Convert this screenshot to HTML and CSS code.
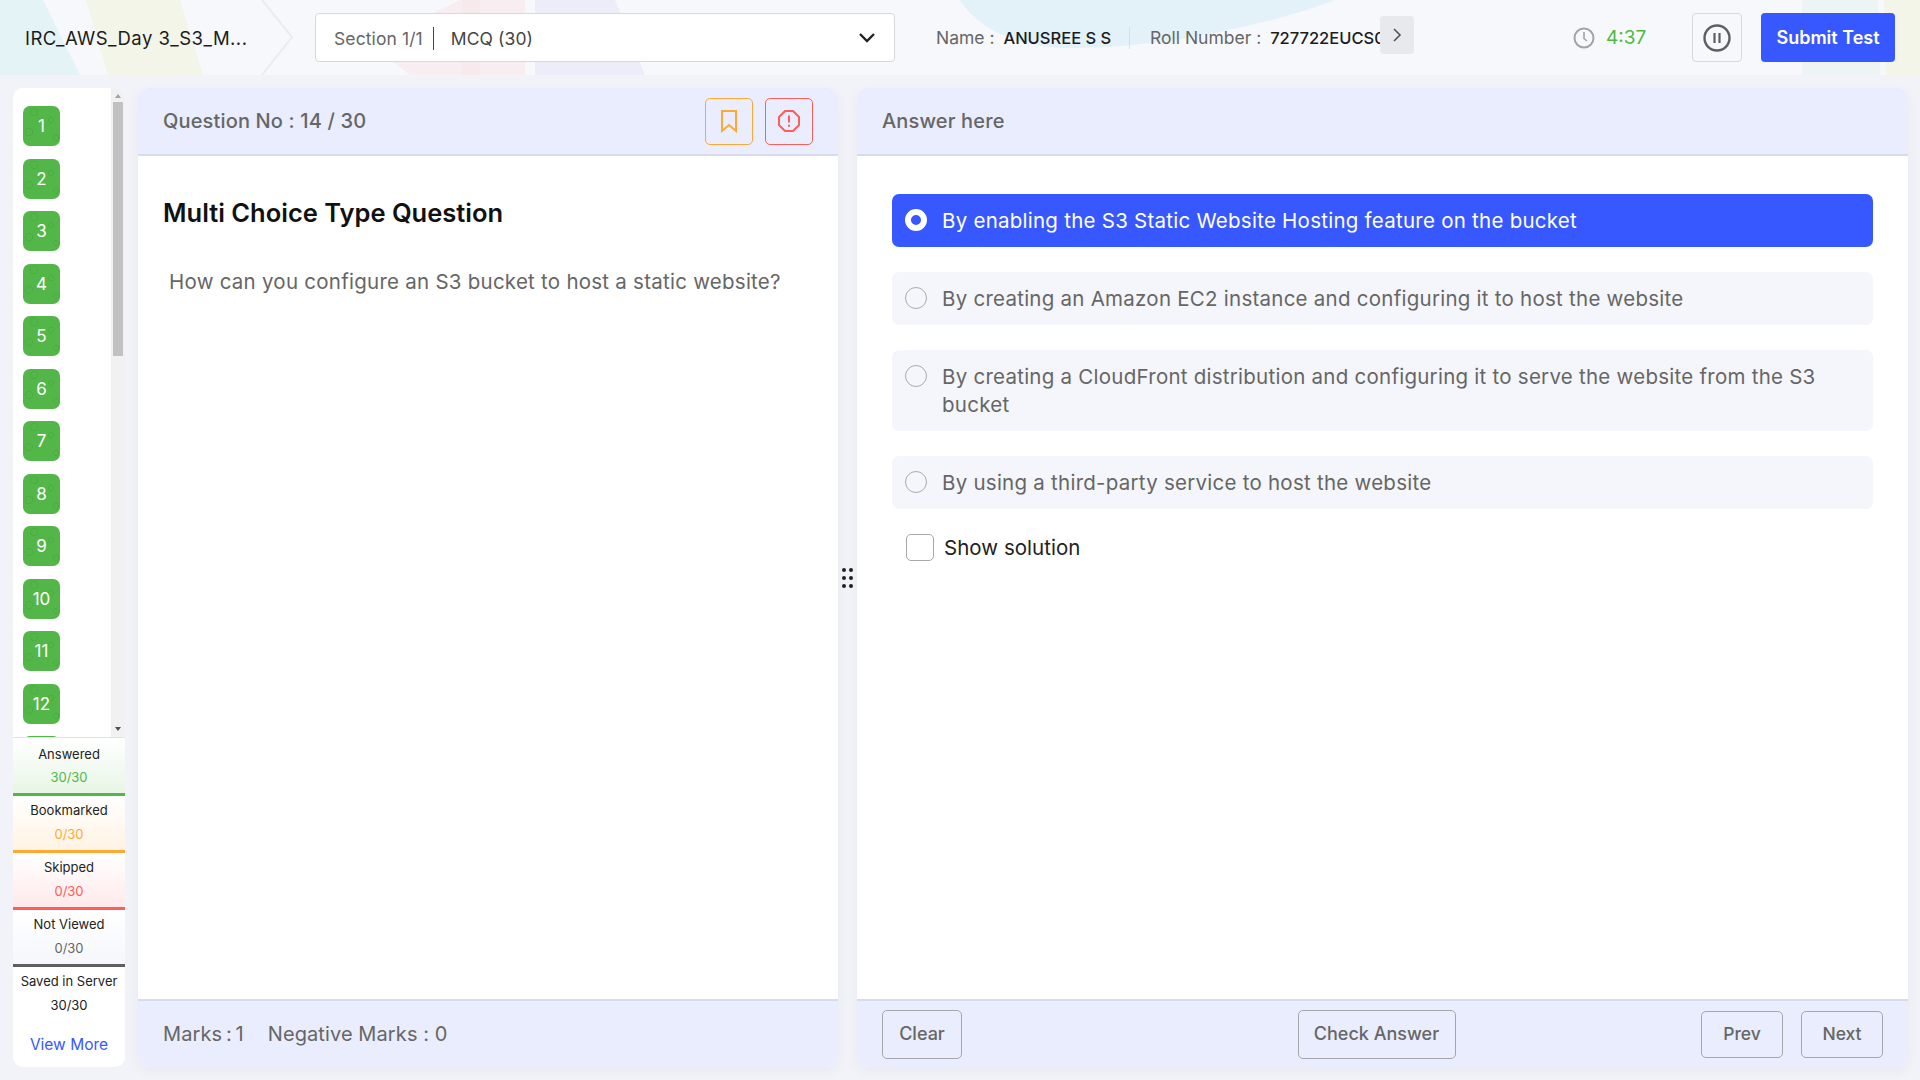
FILE: index.html
```html
<!doctype html>
<html lang="en">
    <head>
        <meta charset="UTF-8" />
        <meta name="viewport" content="width=device-width, initial-scale=1.0" />
        <title>IRC_AWS_Day 3_S3_MCQ</title>
        <link rel="stylesheet" href="styles.css">
    </head>
    <body>
        <div class="header">
            <svg class="header-art" width="1920" height="75" viewBox="0 0 1920 75">
                <path d="M0 0H43L80 75H0Z" fill="#e4f3f6" />
                <path d="M86 0H180L203 75H108Z" fill="#f2f5e7" />
                <path d="M370 40C385 55 400 68 410 75H525V0H460C440 10 400 28 370 40Z" fill="#f8eef1" />
                <path d="M462 0H480V75H462Z" fill="#f6eaed" />
                <path d="M535 0H615L645 75H535Z" fill="#ecedf8" />
                <path d="M960 0H1335C1260 28 1150 50 1060 48C1010 45 975 25 960 0Z" fill="#e3f2f9" />
                <path d="M1802 0H1878L1880 75H1802Z" fill="#ecf4f4" />
                <path d="M1884 0H1920V75H1886Z" fill="#f2f5e7" />
                <path d="M262 0L292 37L262 75" fill="none" stroke="#eaecf2" stroke-width="2" />
            </svg>
            <div class="test-name">IRC_AWS_Day 3_S3_M...</div>
            <div class="section-select">
                <span class="section-no">Section 1/1</span>
                <span class="section-type">MCQ (30)</span>
                <svg class="select-arrow" width="18" height="12" viewBox="0 0 18 12">
                    <path d="M2 2L9 9L16 2" fill="none" stroke="#222" stroke-width="2.4" />
                </svg>
            </div>
            <div class="user-info">
                <div class="user-name">Name : <b>ANUSREE S S</b></div>
                <div class="user-roll">Roll Number : <b>727722EUCS080</b></div>
                <button class="more-btn">
                    <svg width="12" height="16" viewBox="0 0 12 16">
                        <path d="M3 2L9 8L3 14" fill="none" stroke="#555" stroke-width="1.6" />
                    </svg>
                </button>
            </div>
            <div class="timer">
                <svg width="22" height="22" viewBox="0 0 22 22">
                    <circle cx="11" cy="11" r="9.5" fill="none" stroke="#a3a3a3" stroke-width="2" />
                    <path d="M11 5V11.5L14 14" fill="none" stroke="#a3a3a3" stroke-width="1.6" />
                </svg>
                <span>4:37</span>
            </div>
            <button class="pause-btn">
                <svg width="28" height="28" viewBox="0 0 28 28">
                    <circle cx="14" cy="14" r="12.5" fill="none" stroke="#5f5f5f" stroke-width="2.4" />
                    <path d="M11.5 9V19M16.5 9V19" fill="none" stroke="#5f5f5f" stroke-width="2.2" />
                </svg>
            </button>
            <button class="submit-btn">Submit Test</button>
        </div>

        <div class="main">
            <div class="sidebar">
                <div class="nav-wrap">
                    <div class="nav-list">
                        <div class="nav-item">1</div>
                        <div class="nav-item">2</div>
                        <div class="nav-item">3</div>
                        <div class="nav-item">4</div>
                        <div class="nav-item">5</div>
                        <div class="nav-item">6</div>
                        <div class="nav-item">7</div>
                        <div class="nav-item">8</div>
                        <div class="nav-item">9</div>
                        <div class="nav-item">10</div>
                        <div class="nav-item">11</div>
                        <div class="nav-item">12</div>
                        <div class="nav-item"></div>
                    </div>
                    <div class="scrollbar">
                        <div class="scroll-up"></div>
                        <div class="scroll-track"><div class="scroll-thumb"></div></div>
                        <div class="scroll-down"></div>
                    </div>
                </div>
                <div class="stat stat-answered">
                    <div class="stat-label">Answered</div>
                    <div class="stat-value">30/30</div>
                </div>
                <div class="stat stat-bookmarked">
                    <div class="stat-label">Bookmarked</div>
                    <div class="stat-value">0/30</div>
                </div>
                <div class="stat stat-skipped">
                    <div class="stat-label">Skipped</div>
                    <div class="stat-value">0/30</div>
                </div>
                <div class="stat stat-notviewed">
                    <div class="stat-label">Not Viewed</div>
                    <div class="stat-value">0/30</div>
                </div>
                <div class="stat stat-saved">
                    <div class="stat-label">Saved in Server</div>
                    <div class="stat-value">30/30</div>
                </div>
                <div class="view-more">View More</div>
            </div>

            <div class="panel question-panel">
                <div class="panel-head">
                    <div class="panel-title">Question No : 14 / 30</div>
                    <div class="head-actions">
                        <button class="icon-btn bookmark-btn">
                            <svg width="18" height="24" viewBox="0 0 18 24">
                                <path d="M2 2H16V22L9 16L2 22Z" fill="none" stroke="#ffa834" stroke-width="2" />
                            </svg>
                        </button>
                        <button class="icon-btn report-btn">
                            <svg width="24" height="24" viewBox="0 0 24 24">
                                <path d="M8 2H16L22 8V16L16 22H8L2 16V8Z" fill="none" stroke="#ff5c5c" stroke-width="2" stroke-linejoin="round" />
                                <path d="M12 6.5V13.5M12 15.8V17.8" fill="none" stroke="#ff5c5c" stroke-width="2" />
                            </svg>
                        </button>
                    </div>
                </div>
                <div class="panel-body question-body">
                    <h2>Multi Choice Type Question</h2>
                    <p>How can you configure an S3 bucket to host a static website?</p>
                </div>
                <div class="panel-foot marks">
                    <span class="marks-value">Marks : 1</span>
                    <span>Negative Marks : 0</span>
                </div>
            </div>

            <div class="splitter">
                <div class="drag-dots">
                    <i></i><i></i><i></i><i></i><i></i><i></i>
                </div>
            </div>

            <div class="panel answer-panel">
                <div class="panel-head">
                    <div class="panel-title">Answer here</div>
                </div>
                <div class="panel-body answer-body">
                    <div class="option selected"><span class="radio"></span><span>By enabling the S3 Static Website Hosting feature on the bucket</span></div>
                    <div class="option"><span class="radio"></span><span>By creating an Amazon EC2 instance and configuring it to host the website</span></div>
                    <div class="option"><span class="radio"></span><span>By creating a CloudFront distribution and configuring it to serve the website from the S3 bucket</span></div>
                    <div class="option"><span class="radio"></span><span>By using a third-party service to host the website</span></div>
                    <label class="show-solution"><span class="checkbox"></span>Show solution</label>
                </div>
                <div class="panel-foot answer-foot">
                    <div><button class="foot-btn clear-btn">Clear</button></div>
                    <button class="foot-btn check-btn">Check Answer</button>
                    <div class="foot-right">
                        <button class="foot-btn nav-btn">Prev</button>
                        <button class="foot-btn nav-btn">Next</button>
                    </div>
                </div>
            </div>
        </div>
    </body>
</html>
```

FILE: styles.css
```css
* {
    box-sizing: border-box;
}
body {
    font-family: Inter, "Noto Sans", sans-serif;
    margin: 0;
    height: 100vh;
    background-color: #f2f3f8;
    color: #666;
    overflow: hidden;
    display: flex;
    flex-direction: column;
}
button {
    font-family: inherit;
    cursor: pointer;
}
.header {
    position: relative;
    height: 75px;
    background-color: #f6f8fc;
    display: flex;
    align-items: center;
    flex-shrink: 0;
    overflow: hidden;
}
.header-art {
    position: absolute;
    top: 0;
    left: 0;
}
.test-name {
    position: relative;
    width: 315px;
    padding-left: 25px;
    font-size: 18.5px;
    letter-spacing: 0.45px;
    color: #1c1c1c;
}
.section-select {
    position: relative;
    width: 580px;
    height: 49px;
    background-color: #fff;
    border: 1px solid #d8d8dc;
    border-radius: 4px;
    display: flex;
    align-items: center;
    padding: 2px 18px 0;
    font-size: 17.5px;
    letter-spacing: 0.1px;
}
.section-no {
    padding-right: 10px;
    border-right: 1.5px solid #444;
    line-height: 23px;
}
.section-type {
    padding-left: 17px;
    color: #444;
}
.select-arrow {
    margin-left: auto;
    margin-top: -2px;
}
.user-info {
    position: relative;
    margin-left: 41px;
    display: flex;
    align-items: center;
    font-size: 17.5px;
}
.user-info b {
    font-size: 16.5px;
    font-weight: 500;
    color: #1c1c1c;
    margin-left: 4px;
}
.user-name {
    width: 194px;
    border-right: 1px solid #dcdce2;
    line-height: 22px;
    white-space: nowrap;
}
.user-roll {
    width: 230px;
    margin-left: 20px;
    white-space: nowrap;
    overflow: hidden;
}
.more-btn {
    width: 34px;
    height: 38px;
    margin-top: -5px;
    border: none;
    border-radius: 4px;
    background-color: #e8e9ec;
    padding: 0;
    display: flex;
    align-items: center;
    justify-content: center;
}
.timer {
    position: relative;
    width: 119px;
    margin-left: 159px;
    display: flex;
    align-items: center;
    gap: 11px;
    font-size: 19px;
    color: #4fb846;
}
.pause-btn {
    position: relative;
    width: 50px;
    height: 49px;
    background-color: #f7f8fb;
    border: 1px solid #d8d8dc;
    border-radius: 4px;
    padding: 0;
    display: flex;
    align-items: center;
    justify-content: center;
}
.submit-btn {
    position: relative;
    width: 134px;
    height: 49px;
    margin-left: 19px;
    background-color: #3757ff;
    color: #fff;
    border: none;
    border-radius: 4px;
    font-size: 18px;
    font-weight: 600;
}
.main {
    flex: 1;
    display: flex;
    min-height: 0;
    padding: 13px 12px 13px 13px;
}
.sidebar {
    width: 112px;
    margin-right: 13px;
    background-color: #fff;
    border-radius: 10px;
    display: flex;
    flex-direction: column;
    overflow: hidden;
}
.nav-wrap {
    height: 650px;
    display: flex;
    border-bottom: 1px solid #e2e2e2;
    flex-shrink: 0;
}
.nav-list {
    width: 98px;
    padding: 18px 0 0 10px;
    overflow: hidden;
}
.nav-item {
    width: 37px;
    height: 40px;
    margin-bottom: 12.5px;
    border-radius: 7px;
    color: #fff;
    font-size: 17px;
    display: flex;
    align-items: center;
    justify-content: center;
    background-color: #52b748;
    background-image:
        radial-gradient(circle at 11px 6px, transparent 3px, rgba(60, 150, 50, 0.35) 3.5px, transparent 4.5px),
        radial-gradient(circle at 6px 26px, transparent 3px, rgba(60, 150, 50, 0.35) 3.5px, transparent 4.5px),
        radial-gradient(circle at 28px 14px, transparent 2px, rgba(60, 150, 50, 0.35) 2.5px, transparent 3.5px),
        radial-gradient(circle at 33px 32px, transparent 2px, rgba(60, 150, 50, 0.35) 2.5px, transparent 3.5px);
}
.scrollbar {
    width: 14px;
    background-color: #f1f1f1;
    display: flex;
    flex-direction: column;
    align-items: center;
}
.scroll-up,
.scroll-down {
    width: 0;
    height: 0;
    border-left: 3px solid transparent;
    border-right: 3px solid transparent;
    flex-shrink: 0;
}
.scroll-up {
    border-bottom: 4px solid #a3a3a3;
    margin: 6px 0 4px;
}
.scroll-down {
    border-top: 4px solid #505050;
    margin: 4px 0 6px;
}
.scroll-track {
    flex: 1;
    width: 10px;
}
.scroll-thumb {
    height: 254px;
    background-color: #c1c1c1;
}
.stat {
    height: 57px;
    text-align: center;
    font-size: 13px;
    color: #222;
    border-bottom: 3px solid;
    padding-top: 6px;
}
.stat-label {
    line-height: 17px;
}
.stat-value {
    line-height: 17px;
    margin-top: 7px;
}
.stat-answered {
    height: 58px;
    padding-top: 8px;
    background: linear-gradient(#fff, #e8f5e6);
    border-color: #52b748;
}
.stat-answered .stat-value {
    color: #52b748;
    margin-top: 6px;
}
.stat-bookmarked {
    background: linear-gradient(#fff, #fff3e4);
    border-color: #ffa834;
}
.stat-bookmarked .stat-value {
    color: #ffa834;
}
.stat-skipped {
    background: linear-gradient(#fff, #ffeaea);
    border-color: #ff5c5c;
}
.stat-skipped .stat-value {
    color: #ff5c5c;
}
.stat-notviewed {
    background: linear-gradient(#fff, #f5f7fc);
    border-color: #5f5f5f;
}
.stat-notviewed .stat-value {
    color: #666;
}
.stat-saved {
    border-bottom: none;
    height: 52px;
}
.view-more {
    text-align: center;
    font-size: 15.5px;
    color: #3757ff;
    margin-top: 16px;
}
.panel {
    display: flex;
    flex-direction: column;
    background-color: #fff;
    border-radius: 10px;
    overflow: hidden;
    box-shadow: 0 4px 12px rgba(40, 50, 90, 0.05);
}
.question-panel {
    width: 700px;
}
.answer-panel {
    flex: 1;
}
.splitter {
    width: 19px;
    display: flex;
    align-items: center;
    justify-content: center;
}
.drag-dots {
    display: grid;
    grid-template-columns: 4px 4px;
    gap: 4px 3px;
}
.drag-dots i {
    width: 4px;
    height: 4px;
    border-radius: 50%;
    background-color: #222;
}
.panel-head {
    height: 68px;
    flex-shrink: 0;
    background-color: #e9edfd;
    border-bottom: 2px solid #d9dbe9;
    padding: 0 25px;
    display: flex;
    align-items: center;
    justify-content: space-between;
}
.panel-title {
    font-size: 20px;
    font-weight: 500;
    letter-spacing: 0.15px;
    color: #666;
}
.head-actions {
    display: flex;
    gap: 12px;
}
.icon-btn {
    width: 48px;
    height: 47px;
    background: transparent;
    border-radius: 5px;
    display: flex;
    align-items: center;
    justify-content: center;
    padding: 0;
}
.bookmark-btn {
    border: 1px solid #ffa834;
}
.report-btn {
    border: 1px solid #ff5c5c;
}
.panel-body {
    flex: 1;
    min-height: 0;
}
.question-body {
    padding: 40px 25px 0;
}
.question-body h2 {
    margin: 0;
    font-size: 25.5px;
    line-height: 34px;
    font-weight: 600;
    color: #111;
}
.question-body p {
    margin: 37px 0 0 6px;
    font-size: 20.5px;
    letter-spacing: 0.25px;
    line-height: 30px;
}
.answer-body {
    padding: 38px 35px 0;
}
.option {
    display: flex;
    align-items: flex-start;
    gap: 15px;
    padding: 13px 15px 12px 13px;
    margin-bottom: 25px;
    min-height: 53px;
    background-color: #f5f6fb;
    border-radius: 7px;
    font-size: 20.5px;
    letter-spacing: 0.25px;
    line-height: 28px;
}
.option.selected {
    background-color: #3757ff;
    color: #fff;
}
.radio {
    width: 22px;
    height: 22px;
    margin-top: 2px;
    border: 1px solid #aaa;
    border-radius: 50%;
    flex-shrink: 0;
}
.selected .radio {
    border: 6px solid #fff;
    background-color: #3757ff;
}
.show-solution {
    display: flex;
    align-items: center;
    gap: 10px;
    padding-left: 14px;
    font-size: 20.5px;
    letter-spacing: 0.03px;
    color: #222;
}
.checkbox {
    width: 28px;
    height: 27px;
    border: 1px solid #a8a8a8;
    border-radius: 5px;
}
.panel-foot {
    height: 68px;
    flex-shrink: 0;
    background-color: #e9edfd;
    border-top: 2px solid #d9dbe9;
}
.marks {
    display: flex;
    align-items: center;
    gap: 24px;
    padding: 0 25px;
    font-size: 20px;
    letter-spacing: 0.1px;
}
.marks-value {
    word-spacing: -2px;
}
.answer-foot {
    display: grid;
    grid-template-columns: 1fr auto 1fr;
    align-items: center;
    padding: 0 25px;
}
.foot-btn {
    height: 49px;
    background: transparent;
    border: 1px solid #a5a5ad;
    border-radius: 5px;
    color: #666;
    font-size: 18px;
    font-weight: 500;
    padding: 0 0 2px;
}
.clear-btn {
    width: 80px;
}
.check-btn {
    width: 158px;
    margin-right: 12px;
}
.foot-right {
    display: flex;
    justify-content: flex-end;
    gap: 18px;
}
.nav-btn {
    width: 82px;
    height: 47px;
    font-size: 17.5px;
}
```
